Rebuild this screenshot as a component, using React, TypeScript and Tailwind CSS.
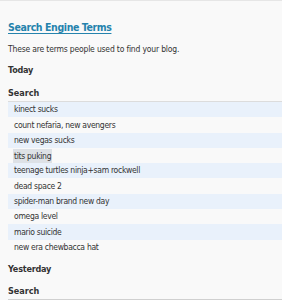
import React from "react";

const today = [
  "kinect sucks",
  "count nefaria, new avengers",
  "new vegas sucks",
  "tits puking",
  "teenage turtles ninja+sam rockwell",
  "dead space 2",
  "spider-man brand new day",
  "omega level",
  "mario suicide",
  "new era chewbacca hat",
];

export default function App() {
  return (
    <div
      className="w-[282px] h-[300px] overflow-hidden bg-[#f9f9f9] border-t border-[#e6e6e6] text-[#333]"
      style={{ fontFamily: '"DejaVu Sans Condensed", "Open Sans", sans-serif' }}
    >
      <div className="pl-2">
        <h3 className="mt-[18px] text-[10.5px] font-bold leading-[16px] tracking-[-0.4px] text-[#2583ad] underline underline-offset-2">
          Search Engine Terms
        </h3>
        <p className="mt-[8px] text-[8.5px] leading-[12px] tracking-[-0.18px]">
          These are terms people used to find your blog.
        </p>
        <h4 className="mt-[9px] text-[9px] font-bold leading-[12px] tracking-[-0.2px]">Today</h4>
        <div className="mt-[11px] text-[9px] font-bold leading-[12px] pb-[2px] border-b border-[#dcdcdc]">
          Search
        </div>
        <div>
          {today.map((t, i) => (
            <div
              key={t}
              className={
                "h-[15.3px] flex items-center pl-[6px] text-[8.5px] tracking-[-0.3px] " +
                (i % 2 === 0 ? "bg-[#e9f1fb]" : "")
              }
            >
              {t === "tits puking" ? (
                <span className="bg-[#dde1e6] px-[1px] -ml-[1px] leading-[14px]">{t}</span>
              ) : (
                <span>{t}</span>
              )}
            </div>
          ))}
        </div>
        <h4 className="mt-[8px] text-[9px] font-bold leading-[12px] tracking-[-0.2px]">Yesterday</h4>
        <div className="mt-[10px] text-[9px] font-bold leading-[12px] pb-[2px] border-b border-[#d0d0d0]">
          Search
        </div>
      </div>
    </div>
  );
}
